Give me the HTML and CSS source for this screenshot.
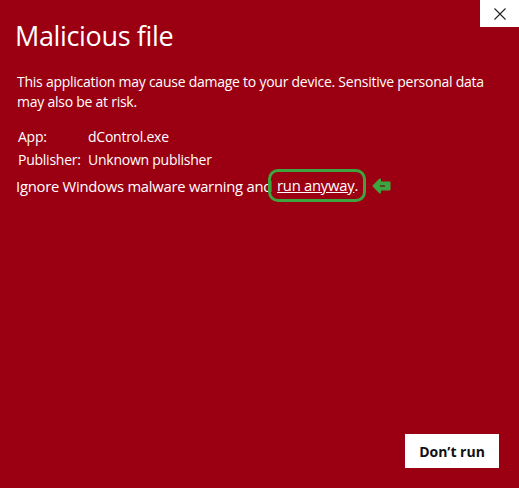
FILE: index.html
```html
<!DOCTYPE html>
<html>
<head>
<meta charset="utf-8">
<link rel="stylesheet" href="styles.css">
</head>
<body>
<div class="dialog">
  <button class="close" aria-label="Close">
    <svg width="12" height="12" viewBox="0 0 12 12"><path d="M0.5 0.5 L11.5 11.5 M11.5 0.5 L0.5 11.5" stroke="#222" stroke-width="1.1" fill="none"/></svg>
  </button>
  <h1 class="title">Malicious file</h1>
  <p class="desc">This application may cause damage to your device. Sensitive personal data may also be at risk.</p>
  <div class="info">
    <div class="row"><span class="label">App:</span><span>dControl.exe</span></div>
    <div class="row"><span class="label">Publisher:</span><span>Unknown publisher</span></div>
  </div>
  <p class="ignore">Ignore Windows malware warning and <span class="hl"><a class="link" href="#">run anyway</a>.</span><svg class="arrow" width="19" height="16" viewBox="0 0 19 16"><path d="M1.5 8 L8 1.5 L8 4.5 L17.5 4.5 L17.5 11.5 L8 11.5 L8 14.5 Z" fill="#3da43f" stroke="#3da43f" stroke-linejoin="round" stroke-width="2"/><path d="M8 8 L13 8" stroke="#5a1a14" stroke-width="1.3"/></svg></p>
  <div class="spacer"></div>
  <div class="actions"><button class="btn">Don’t run</button></div>
</div>
</body>
</html>
```
FILE: styles.css
```css
html, body { margin: 0; padding: 0; }
body {
  width: 519px; height: 488px;
  background: #9b0012;
  font-family: "Open Sans", "Noto Sans", sans-serif;
  color: #fff;
  overflow: hidden;
}
.dialog {
  position: relative;
  height: 488px;
  display: flex;
  flex-direction: column;
  box-sizing: border-box;
  padding: 0 0 20px 0;
}
.close {
  position: absolute;
  top: 0; right: 0;
  width: 39px; height: 27px;
  background: #fff;
  border: none;
  padding: 0;
  display: flex; align-items: center; justify-content: center;
}
.title {
  margin: 18px 0 0 15px;
  font-weight: 400;
  font-size: 27px;
  line-height: 36px;
  letter-spacing: -0.35px;
}
.desc {
  margin: 18px 20px 0 17px;
  font-size: 14px;
  line-height: 20px;
  letter-spacing: -0.25px;
}
.info { margin: 13px 0 0 18px; font-size: 14px; letter-spacing: -0.25px; }
.row { display: flex; line-height: 23px; }
.label { width: 70px; }
.ignore {
  margin: -2px 0 0 16px;
  font-size: 14.8px;
  line-height: 26px;
  letter-spacing: -0.25px;
  display: flex; align-items: center;
}
.hl {
  border: 3px solid #3da43f;
  border-radius: 10px;
  padding: 4px 5px 4px 6px;
  margin-left: -4px;
  line-height: 19px;
}
.link { color: #fff; text-decoration: underline; }
.arrow { margin-left: 6px; }
.spacer { flex: 1; }
.actions { display: flex; justify-content: flex-end; padding-right: 20px; }
.btn {
  width: 94px; height: 34px;
  background: #fff;
  border: none;
  font-family: "Open Sans", sans-serif;
  font-weight: 700;
  font-size: 14px;
  color: #111;
}
```
